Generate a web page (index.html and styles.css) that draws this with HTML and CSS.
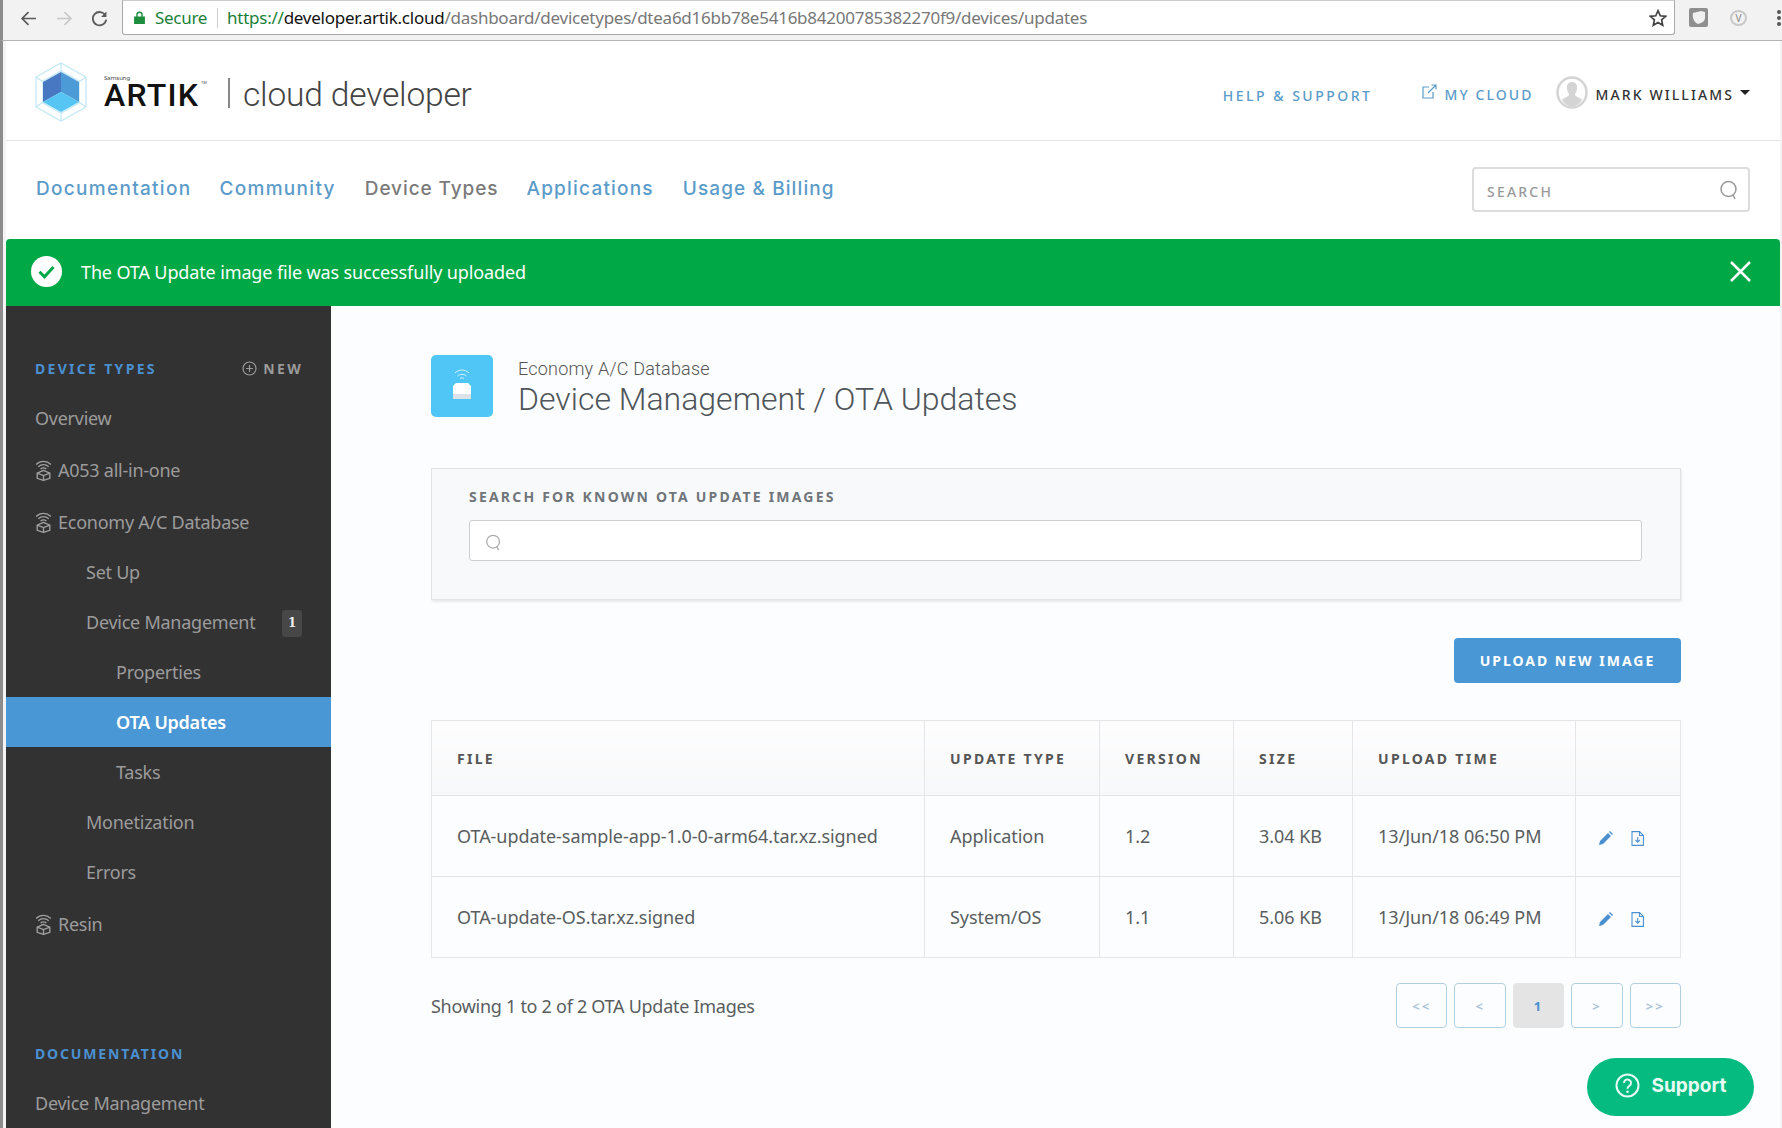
FILE: index.html
```html
<!DOCTYPE html>
<html lang="en">
<head>
<meta charset="utf-8">
<title>Device Management / OTA Updates</title>
<link rel="stylesheet" href="styles.css">
</head>
<body>
<svg class="defs" width="0" height="0" aria-hidden="true">
  <symbol id="wifibox" viewBox="0 0 16 20">
    <g fill="none" stroke="currentColor" stroke-width="1.3">
      <path d="M1 4.2C5 .4 11 .4 15 4.2"/>
      <path d="M3 6.4C6 3.8 10 3.8 13 6.4"/>
      <path d="M5.2 8.6C6.8 7.3 9.2 7.3 10.800 8.600"/>
      <path d="M8 9.800 14 12.500V17.500L8 19.400 2 17.500V12.500Z"/>
      <path d="M2 12.500 8 14.800 14 12.500M8 14.800V19.400"/>
    </g>
  </symbol>
  <symbol id="pencil" viewBox="0 0 14 14">
    <path fill="currentColor" d="M0 14 1 10 9 2 12 5 4 13ZM10 1 11 0 14 3 13 4Z"/>
  </symbol>
  <symbol id="filedown" viewBox="0 0 13 15">
    <g fill="none" stroke="currentColor" stroke-width="1.100">
      <path d="M1 .6H8.500L12.400 4.500V14.400H1Z"/>
      <path d="M8.500 .6V4.500H12.400"/>
      <path d="M6.700 6V11M4.400 8.800 6.700 11.200 9 8.800"/>
    </g>
  </symbol>
  <symbol id="search" viewBox="0 0 20 20">
    <g fill="none" stroke="currentColor" stroke-width="1.500">
      <circle cx="9.500" cy="9" r="7.500"/>
      <path d="M14 15 16 19"/>
    </g>
  </symbol>
</svg>

<div class="browser">
  <div class="tools">
    <svg class="nav-icon" viewBox="0 0 16 16"><path d="M15 8H2M8 2 2 8l6 6" fill="none" stroke="#5a5a5a" stroke-width="1.600"/></svg>
    <svg class="nav-icon" viewBox="0 0 16 16"><path d="M1 8H14M8 2l6 6-6 6" fill="none" stroke="#c8c8c8" stroke-width="1.600"/></svg>
    <svg class="nav-icon" viewBox="0 0 16 16"><path d="M13.500 5A6.300 6.300 0 1 0 14.300 9" fill="none" stroke="#5a5a5a" stroke-width="1.700"/><path d="M14.500 1.500V6.500H9.500Z" fill="#5a5a5a"/></svg>
  </div>
  <div class="omnibox">
    <svg class="lock" viewBox="0 0 10 12"><path fill="#1e8e3e" d="M0 5h10v7H0zM2 5V3.500a3 3 0 0 1 6 0V5H6.700V3.500a1.700 1.700 0 0 0-3.400 0V5z"/></svg>
    <span class="secure">Secure</span>
    <span class="url"><span class="scheme">https://</span><span class="host">developer.artik.cloud</span>/dashboard/devicetypes/dtea6d16bb78e5416b84200785382270f9/devices/updates</span>
    <svg class="star" viewBox="0 0 16 16"><path d="M8 1.500 10 6l4.800.500-3.600 3.200 1 4.800L8 12l-4.200 2.500 1-4.800L1.200 6.500 6 6Z" fill="none" stroke="#444" stroke-width="1.500"/></svg>
  </div>
  <div class="extensions">
    <svg class="ext-shield" width="19" height="19" viewBox="0 0 19 19"><rect width="19" height="19" rx="2" fill="#8f8f8f"/><path d="M4 5 12 3 16 4V10C16 13 13 15 9 16 5 14 3 10 4 5Z" fill="#f1f1f1"/></svg>
    <span class="ext-v">V</span>
    <span class="menu-dots"><i></i><i></i><i></i></span>
  </div>
</div>

<div class="window">
  <header class="topbar">
    <div class="brand">
      <svg class="cube" width="54" height="60" viewBox="0 0 54 60">
        <g fill="none" stroke="#bfe7f5" stroke-width="1.200">
          <path d="M27 1 52 15V45L27 59 2 45V15Z"/>
          <path d="M27 1V9M52 15 45 20M52 45 45 40M27 59V51M2 45 9 40M2 15 9 20"/>
          <path d="M27 9 45 19V41L27 51 9 41V19Z"/>
        </g>
        <path fill="#4878c2" d="M27 10 9 20V40L27 30Z"/>
        <path fill="#4c9ad6" d="M27 10 45 20V40L27 30Z"/>
        <path fill="#56c5f3" d="M27 30 45 40 27 50 9 40Z"/>
      </svg>
      <div class="wordmark">
        <span class="samsung">Samsung</span>
        <span class="artik">ARTIK</span>
        <span class="tm">TM</span>
      </div>
      <span class="brand-sep"></span>
      <span class="brand-sub">cloud developer</span>
    </div>
    <div class="top-links">
      <a class="help">HELP &amp; SUPPORT</a>
      <a class="mycloud">
        <svg width="15" height="15" viewBox="0 0 15 15"><path d="M7 3H1V14H11V8M6 9 14 1M9.500 1H14V5.500" fill="none" stroke="#5b9bc9" stroke-width="1.200"/></svg>
        MY CLOUD
      </a>
      <div class="user">
        <svg width="32" height="33" viewBox="0 0 32 33"><ellipse cx="16" cy="16.500" rx="14.500" ry="15" fill="#fff" stroke="#d4d4d4" stroke-width="2.500"/><path fill="#d4d4d4" d="M16 6c4 0 5.500 3 5 7-.3 2.500-1.500 4-2 5-.3 1 .5 2 2 2.700 2 1 4 1.500 5 3.300A13 14 0 0 1 16 30.500 13 14 0 0 1 6 24c1-1.800 3-2.300 5-3.300 1.500-.7 2.300-1.700 2-2.700-.5-1-1.700-2.500-2-5-.5-4 1-7 5-7Z"/></svg>
        <span>MARK WILLIAMS</span>
        <i class="caret"></i>
      </div>
    </div>
  </header>

  <nav class="mainnav">
    <div class="nav-links">
      <a>Documentation</a>
      <a>Community</a>
      <a class="current">Device Types</a>
      <a class="apps">Applications</a>
      <a class="billing">Usage &amp; Billing</a>
    </div>
    <div class="nav-search">
      <span>SEARCH</span>
      <svg width="20" height="22" viewBox="0 0 20 20"><use href="#search"/></svg>
    </div>
  </nav>

  <div class="alert">
    <svg width="31" height="31" viewBox="0 0 31 31"><circle cx="15.500" cy="15.500" r="15.500" fill="#fff"/><path d="M8.500 15.800 13.500 20.800 22.500 11" fill="none" stroke="#00a846" stroke-width="3"/></svg>
    <span class="alert-text">The OTA Update image file was successfully uploaded</span>
    <svg class="alert-close" width="21" height="21" viewBox="0 0 21 21"><path d="M1 1 20 20M20 1 1 20" fill="none" stroke="#fff" stroke-width="2.500"/></svg>
  </div>

  <div class="content">
    <aside class="sidebar">
      <div class="side-head first"><span class="side-title">DEVICE TYPES</span>
        <span class="side-new"><svg width="15" height="15" viewBox="0 0 15 15"><circle cx="7.500" cy="7.500" r="6.500" fill="none" stroke="currentColor" stroke-width="1.200"/><path d="M7.500 4V11M4 7.500H11" stroke="currentColor" stroke-width="1.200"/></svg>NEW</span></div>
      <a class="item top plain">Overview</a>
      <a class="item top"><svg class="wifi" width="17" height="21"><use href="#wifibox"/></svg>A053 all-in-one</a>
      <a class="item top"><svg class="wifi" width="17" height="21"><use href="#wifibox"/></svg>Economy A/C Database</a>
      <a class="item sub">Set Up</a>
      <a class="item sub">Device Management<span class="badge">1</span></a>
      <a class="item subsub">Properties</a>
      <a class="item subsub active">OTA Updates</a>
      <a class="item subsub">Tasks</a>
      <a class="item sub">Monetization</a>
      <a class="item sub">Errors</a>
      <a class="item top"><svg class="wifi" width="17" height="21"><use href="#wifibox"/></svg>Resin</a>
      <div class="side-head docs"><span class="side-title">DOCUMENTATION</span></div>
      <a class="item top plain">Device Management</a>
    </aside>

    <main class="main">
      <div class="page-head">
        <div class="page-icon">
          <svg width="22" height="32" viewBox="0 0 22 32">
            <g fill="none" stroke="#fff" stroke-width="1" opacity=".8"><path d="M4 5C8 1 14 1 18 5"/><path d="M6.500 8C9 5.800 13 5.800 15.500 8"/><path d="M9 10.500C10.200 9.600 11.800 9.600 13 10.500"/></g>
            <path fill="#fff" d="M5 15h12l3 3v8H2v-8z"/>
            <path fill="#dbe3e8" d="M2 26h18v5H2z"/>
          </svg>
        </div>
        <div class="page-titles">
          <div class="crumb">Economy A/C Database</div>
          <h1>Device Management / OTA Updates</h1>
        </div>
      </div>

      <section class="search-panel">
        <label class="search-label">SEARCH FOR KNOWN OTA UPDATE IMAGES</label>
        <div class="search-input"><svg width="17" height="19" viewBox="0 0 20 20"><use href="#search"/></svg></div>
      </section>

      <div class="actions"><button class="upload">UPLOAD NEW IMAGE</button></div>

      <table class="files">
        <colgroup><col class="c1"><col class="c2"><col class="c3"><col class="c4"><col class="c5"><col class="c6"></colgroup>
        <thead>
          <tr><th>FILE</th><th>UPDATE TYPE</th><th>VERSION</th><th>SIZE</th><th>UPLOAD TIME</th><th></th></tr>
        </thead>
        <tbody>
          <tr>
            <td>OTA-update-sample-app-1.0-0-arm64.tar.xz.signed</td><td>Application</td><td>1.2</td><td>3.04 KB</td><td>13/Jun/18 06:50 PM</td>
            <td class="row-actions"><svg width="14" height="14"><use href="#pencil"/></svg><svg width="13" height="15"><use href="#filedown"/></svg></td>
          </tr>
          <tr>
            <td>OTA-update-OS.tar.xz.signed</td><td>System/OS</td><td>1.1</td><td>5.06 KB</td><td>13/Jun/18 06:49 PM</td>
            <td class="row-actions"><svg width="14" height="14"><use href="#pencil"/></svg><svg width="13" height="15"><use href="#filedown"/></svg></td>
          </tr>
        </tbody>
      </table>

      <div class="table-foot">
        <span class="showing">Showing 1 to 2 of 2 OTA Update Images</span>
        <div class="pager">
          <a>&lt;&lt;</a><a>&lt;</a><a class="on">1</a><a>&gt;</a><a>&gt;&gt;</a>
        </div>
      </div>
    </main>
  </div>
  <a class="support">
    <svg width="25" height="25" viewBox="0 0 25 25"><circle cx="12.500" cy="12.500" r="11" fill="none" stroke="#e8fbf5" stroke-width="2"/><path d="M9 10a3.500 3.500 0 1 1 5.500 2.800c-1.300.9-2 1.500-2 3" fill="none" stroke="#e8fbf5" stroke-width="2"/><circle cx="12.500" cy="18.800" r="1.300" fill="#e8fbf5"/></svg>
    Support
  </a>
</div>
</body>
</html>
```
FILE: styles.css
```css
* { box-sizing: border-box; }
html, body { margin: 0; height: 1128px; overflow: hidden; }
body { font-family: "Noto Sans", sans-serif; background: #fff; color: #555; }
a { text-decoration: none; }
.defs { position: absolute; }

/* browser chrome */
.browser { height: 41px; display: flex; background: #f2f2f2; border-bottom: 1px solid #b4b4b4; border-left: 3px solid #8c8c8c; }
.tools { width: 119px; display: flex; gap: 18.500px; padding: 10px 0 0 17px; flex: none; }
.nav-icon { width: 17px; height: 17px; }
.omnibox { width: 1553px; height: 35px; flex: none; background: #fff; border: 1px solid #a9a9a9; border-top-color: #ccc; border-radius: 0 0 3px 3px; display: flex; align-items: center; padding-left: 11px; }
.lock { width: 11px; height: 13px; flex: none; }
.secure { color: #1a7f37; font: 17px "Noto Sans", sans-serif; margin-left: 10px; padding-right: 10px; border-right: 1px solid #ccc; line-height: 20px; letter-spacing: -.3px; }
.url { font: 17px "Noto Sans", sans-serif; color: #777; margin-left: 9px; letter-spacing: -.25px; white-space: nowrap; }
.scheme { color: #1a7f37; }
.host { color: #111; }
.star { width: 18px; height: 18px; margin-left: auto; margin-right: 7px; }
.extensions { flex: 1; display: flex; align-items: flex-start; padding: 8px 0 0 14px; }
.ext-shield { flex: none; }
.ext-v { width: 17px; height: 16px; margin: 2px 0 0 22px; border: 2px solid #c9c9c9; border-radius: 50%; font: 10px/12px "Noto Sans", sans-serif; color: #888; text-align: center; flex: none; }
.menu-dots { display: flex; flex-direction: column; gap: 2px; margin: 2px 0 0 30px; flex: none; }
.menu-dots i { width: 4px; height: 4px; border-radius: 50%; background: #555; }

/* page window */
.window { position: relative; height: 1087px; border-left: 3px solid #8c8c8c; padding-left: 3px; padding-right: 2px; background: #f4f4f4; }

/* top bar */
.topbar { height: 100px; border-bottom: 1px solid #e4e4e4; display: flex; justify-content: space-between; background: #fff; }
.brand { display: flex; align-items: center; padding: 5px 0 0 28px; }
.cube { flex: none; margin-top: -3px; }
.wordmark { position: relative; margin: -3px 0 0 16px; width: 124px; height: 36px; padding-top: 9px; }
.samsung { position: absolute; left: 0; top: 0; font: 6px/8px "Noto Sans", sans-serif; color: #444; }
.artik { display: block; font: 500 32px/24px "Roboto", sans-serif; color: #111; letter-spacing: 1.2px; }
.tm { position: absolute; left: 97px; top: 6px; font: 4px/5px "Noto Sans", sans-serif; color: #555; }
.brand-sep { width: 2px; height: 30px; background: #888; margin-right: 13px; }
.brand-sub { font: 300 33.6px/40px "Roboto", sans-serif; color: #444; letter-spacing: -.2px; margin-top: 4px; }
.top-links { display: flex; align-items: center; padding: 8px 30px 0 0; font-size: 14px; letter-spacing: 2.1px; }
.help { color: #5b9bc9; font-weight: 500; margin-right: 50px; padding-top: 2px; letter-spacing: 2.5px; }
.mycloud { color: #5b9bc9; font-weight: 500; display: flex; gap: 7px; align-items: center; margin-right: 22px; }
.mycloud svg { margin-top: -6px; }
.user { display: flex; align-items: center; color: #333; font-weight: 500; gap: 8px; }
.user svg { margin-top: -5px; }
.caret { width: 0; height: 0; border: 5px solid transparent; border-top: 5px solid #222; border-bottom: 0; margin: -4px 0 0 -2px; }

/* main nav */
.mainnav { height: 98px; display: flex; justify-content: space-between; align-items: center; padding: 0 30px 0 30px; background: #fff; }
.nav-links { display: flex; gap: 28px; font: 500 19px/24px "Inter", sans-serif; letter-spacing: 1.3px; margin-top: -2px; }
.nav-links a { color: #5b9bc9; }
.nav-links .current { color: #7a7a7a; letter-spacing: .92px; margin-left: 1px; }
.nav-links .apps { letter-spacing: 1.2px; }
.nav-links .billing { letter-spacing: 1.1px; margin-left: 1px; }
.nav-search { width: 278px; height: 45px; border: 2px solid #dcdcdc; border-radius: 4px; display: flex; align-items: center; justify-content: space-between; padding: 3px 9px 0 13px; color: #999; font-size: 14px; font-weight: 500; letter-spacing: 2.2px; margin-top: -1px; }
.nav-search svg { color: #999; margin-top: -3px; }

/* alert */
.alert { height: 67px; background: #00a846; border-radius: 4px 4px 0 0; display: flex; align-items: center; padding: 0 29px 2px 25px; color: #fff; }
.alert-text { font-size: 18px; margin-left: 19px; letter-spacing: -.13px; }
.alert-close { margin-left: auto; }

/* content */
.content { display: flex; height: 822px; overflow: hidden; }
.sidebar { width: 325px; flex: none; background: #333233; color: #a0a0a0; }
.side-head { display: flex; justify-content: space-between; align-items: center; padding: 0 28px 0 29px; font-size: 14px; font-weight: 700; letter-spacing: 2.300px; }
.side-head.first { height: 50px; margin-top: 37px; }
.side-head.docs { height: 49px; margin-top: 80px; letter-spacing: 1.85px; }
.side-title { color: #4a90d0; }
.side-new { color: #9a9a9a; display: flex; align-items: center; gap: 6px; }
.item { display: flex; align-items: center; color: #9c9c9c; font-size: 18px; letter-spacing: -.25px; height: 50px; white-space: nowrap; }
.item.top { height: 52px; padding: 2px 0 0 29px; }
.item.top.plain { height: 50px; padding-top: 0; }
.item.sub { padding-left: 80px; }
.item.subsub { padding-left: 110px; }
.item.active { background: #4a97d5; color: #fff; font-weight: 600; }
.wifi { color: #a0a0a0; margin-right: 6px; flex: none; }
.badge { margin: 2px 29px 0 auto; width: 20px; height: 27px; background: #474747; border-radius: 3px; color: #eee; font: 700 12px/27px "DejaVu Serif", serif; text-align: center; }

.main { flex: 1; background: #fcfdfe; padding: 49px 100px 0 100px; }
.page-head { display: flex; gap: 25px; height: 62px; }
.page-icon { width: 62px; height: 62px; background: #4fc6f5; border-radius: 5px; display: flex; justify-content: center; align-items: center; padding-bottom: 4px; }
.page-titles { padding-top: 3px; }
.crumb { font: 300 18px/22px "Roboto", sans-serif; color: #555; letter-spacing: .2px; }
h1 { margin: -1px 0 0; font: 300 32px/40px "Roboto", sans-serif; color: #4f555a; }

.search-panel { margin-top: 51px; height: 132px; background: #f8f9fa; border: 1px solid #e3e3e3; box-shadow: 1px 2px 2px rgba(0,0,0,.08); padding: 18px 38px 0 37px; }
.search-label { display: block; font-size: 14px; font-weight: 700; color: #70757a; letter-spacing: 2.2px; line-height: 20px; }
.search-input { margin-top: 13px; height: 41px; background: #fff; border: 1px solid #cfcfcf; border-radius: 3px; padding: 12px 0 0 15px; color: #aaa; }

.actions { margin-top: 38px; display: flex; justify-content: flex-end; }
.upload { width: 227px; height: 45px; background: #4a97d5; color: #fff; border: 0; border-radius: 4px; font: 700 14px "Noto Sans", sans-serif; letter-spacing: 2px; }

.files { margin-top: 37px; width: 1249px; table-layout: fixed; border-collapse: collapse; }
.c1 { width: 493px; } .c2 { width: 175px; } .c3 { width: 134px; } .c4 { width: 119px; } .c5 { width: 223px; } .c6 { width: 105px; }
.files th, .files td { border: 1px solid #e6e6e8; padding: 0 0 0 25px; text-align: left; }
.files th { height: 75px; font-size: 14px; font-weight: 700; color: #555; letter-spacing: 2.3px; background: linear-gradient(#fdfdfe, #f7f8f9); }
.files td { height: 81px; font-size: 18px; color: #595d60; letter-spacing: -.05px; white-space: nowrap; }
.files .row-actions { color: #4a90d0; padding-left: 23px; }
.row-actions svg { display: inline-block; vertical-align: middle; }
.row-actions svg + svg { margin-left: 18px; }

.table-foot { margin-top: 25px; display: flex; justify-content: space-between; align-items: center; }
.showing { font-size: 18px; color: #595d60; letter-spacing: -.28px; }
.pager { display: flex; gap: 7px; }
.pager a { width: 51.400px; height: 45px; border: 1px solid #b2cfe2; border-radius: 4px; display: flex; justify-content: center; align-items: center; color: #a9c3d9; font-size: 13px; font-weight: 700; letter-spacing: 2px; }
.pager a.on { background: #e4e4e4; border-color: #e4e4e4; color: #4a90d0; }

.support { position: absolute; right: 28px; top: 1017px; width: 167px; height: 58px; border-radius: 29px; background: #05bb80; color: #e8fbf5; display: flex; align-items: center; justify-content: center; gap: 12px; padding-bottom: 3px; font: 700 19px "Inter", sans-serif; }
```
